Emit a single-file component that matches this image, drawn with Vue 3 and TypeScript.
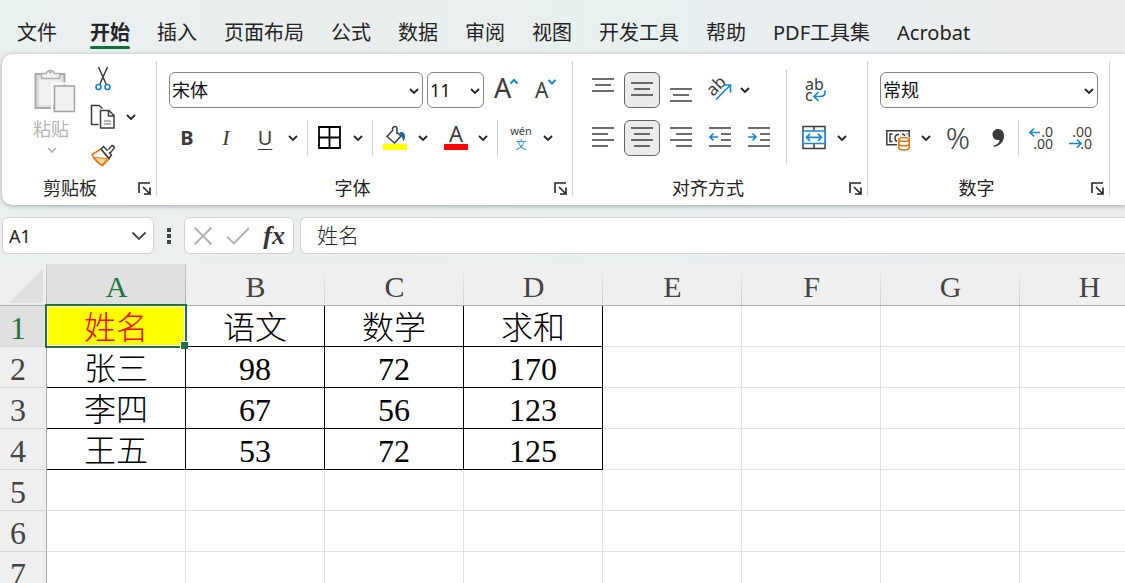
<script setup lang="ts">
import { ref } from 'vue'

interface Line { x1: number; x2: number; y: number }
interface AlignTool { name: string; active?: boolean; lines: Line[]; arrow?: string }

const tabs = ['文件', '开始', '插入', '页面布局', '公式', '数据', '审阅', '视图', '开发工具', '帮助', 'PDF工具集', 'Acrobat']
const activeTab = ref('开始')

const stack = (ys: number[], spans: [number, number][]): Line[] =>
  ys.map((y, i) => ({ x1: spans[i % spans.length][0], x2: spans[i % spans.length][1], y }))

const verticalTools: AlignTool[] = [
  { name: '顶端对齐', lines: stack([7, 13, 19], [[7, 29], [10, 26]]) },
  { name: '垂直居中', active: true, lines: stack([11, 17, 23], [[7, 29], [10, 26]]) },
  { name: '底端对齐', lines: stack([17, 23, 29], [[7, 29], [10, 26]]) },
]

const indentLines: Line[] = [
  { x1: 7, x2: 29, y: 8 }, { x1: 19, x2: 29, y: 14 }, { x1: 19, x2: 29, y: 20 }, { x1: 7, x2: 29, y: 26 },
]

const horizontalTools: AlignTool[] = [
  { name: '左对齐', lines: stack([8, 14, 20, 26], [[7, 29], [7, 23]]) },
  { name: '居中', active: true, lines: stack([8, 14, 20, 26], [[7, 29], [10, 26]]) },
  { name: '右对齐', lines: stack([8, 14, 20, 26], [[7, 29], [13, 29]]) },
  { name: '减少缩进量', lines: indentLines, arrow: 'M16 17H8M11.5 13.5L8 17l3.5 3.5' },
  { name: '增加缩进量', lines: indentLines, arrow: 'M7 17h8M11.5 13.5L15 17l-3.5 3.5' },
]

const font = ref('宋体')
const size = ref('11')
const format = ref('常规')
const cellName = ref('A1')
const formula = ref('姓名')

const columns = ['A', 'B', 'C', 'D', 'E', 'F', 'G', 'H']
const data: string[][] = [
  ['姓名', '语文', '数学', '求和'],
  ['张三', '98', '72', '170'],
  ['李四', '67', '56', '123'],
  ['王五', '53', '72', '125'],
]
const rowCount = 7
const cell = (row: number, col: number): string => data[row - 1]?.[col] ?? ''
</script>

<template>
  <div class="app">
    <nav class="tabs">
      <button
        v-for="tab in tabs"
        :key="tab"
        type="button"
        class="tab"
        :class="{ current: tab === activeTab }"
        @click="activeTab = tab"
      >{{ tab }}</button>
    </nav>

    <div class="ribbon">
      <section class="group clipboard">
        <div class="tools clip-tools">
          <button type="button" class="paste" disabled>
            <svg width="42" height="46" viewBox="0 0 42 46">
              <rect x="1.5" y="7" width="29" height="34" fill="#dedede" stroke="#a9a9a9" stroke-width="2" />
              <rect x="5" y="11" width="22" height="27" fill="#f0f0f0" />
              <path d="M7.5 11.500V6.500H12A4.500 4.500 0 0 1 20.500 6.500H25.500V11.500Z" fill="#f3f3f3" stroke="#b0b0b0" stroke-width="1.500" />
              <circle cx="16.300" cy="5.500" r="1.300" fill="#b0b0b0" />
              <path d="M18 45V16.500H42" fill="none" stroke="#fff" stroke-width="2" />
              <rect x="20.500" y="19" width="20" height="25.500" fill="#f1f1f1" stroke="#a3a3a3" stroke-width="1.500" />
            </svg>
            <span>粘贴</span>
            <svg width="20" height="10" viewBox="0 0 20 10"><path class="chev pale" d="M6 3l4 4 4-4" /></svg>
          </button>
          <div class="clip-small">
            <button type="button" class="tool" aria-label="剪切">
              <svg class="icon" viewBox="0 0 36 36">
                <path d="M13.500 6L21.500 24M22.500 6L14.500 24" class="ink" />
                <circle cx="13.500" cy="26" r="2.500" class="blue" />
                <circle cx="22.500" cy="26" r="2.500" class="blue" />
              </svg>
            </button>
            <div class="split">
              <button type="button" class="tool" aria-label="复制">
                <svg class="icon" viewBox="0 0 36 36">
                  <path d="M13.500 25.500H6.500V6.500H14l3.500 3" class="ink" />
                  <path d="M15.500 11.500h8.500l5 5v12.500H15.500zM23.500 11.500v5.500H29" class="ink" />
                  <path d="M19 22h7M19 25h7" class="ink thin" />
                </svg>
              </button>
              <button type="button" class="more" aria-label="复制选项"><svg class="arrow" viewBox="0 0 20 36"><path class="chev" d="M6 16l4 4 4-4" /></svg></button>
            </div>
            <button type="button" class="tool" aria-label="格式刷">
              <svg class="icon" viewBox="0 0 36 36">
                <path d="M16 12L7 17.500Q10 25 17.500 28.500L24 22z" fill="#fff" stroke="#e8730c" stroke-width="1.500" />
                <path d="M9.500 20.500l12.500 1-4.500 6.500q-5-2.500-8-7.500z" fill="#fbd8a0" stroke="#e8730c" />
                <path d="M22.500 16.500L27.500 10.500" stroke="#3c3c3c" stroke-width="5" stroke-linecap="round" />
                <path d="M22 17L27.500 10.500" stroke="#fff" stroke-width="2" stroke-linecap="round" />
                <path d="M16 12l2.500-2.500 8 8.500-2.500 3.500z" fill="#fff" stroke="#3c3c3c" stroke-width="1.500" />
                <path d="M22 16l2.500-3" stroke="#fff" stroke-width="2" />
              </svg>
            </button>
          </div>
        </div>
        <footer class="caption"><span>剪贴板</span>
          <button type="button" class="launcher" aria-label="剪贴板设置"><svg width="14" height="14" viewBox="0 0 14 14"><path d="M2 12V2h11M6 6l6 6M13 6.500V13H7" /></svg></button>
        </footer>
      </section>

      <section class="group font-group">
        <div class="tools">
          <div class="row">
            <label class="combo wide">
              <select v-model="font" aria-label="字体"><option>宋体</option></select>
              <svg class="combo-arrow" viewBox="0 0 20 36"><path class="chev" d="M8 16l4 4 4-4" /></svg>
            </label>
            <label class="combo small">
              <select v-model="size" aria-label="字号"><option>11</option></select>
              <svg class="combo-arrow" viewBox="0 0 20 36"><path class="chev" d="M8 16l4 4 4-4" /></svg>
            </label>
            <button type="button" class="tool" aria-label="增大字号">
              <svg class="icon" viewBox="0 0 36 36"><text x="6" y="26" font-size="27">A</text><path d="M22.500 11.500L26 8l3.500 3.500" class="blue bold" /></svg>
            </button>
            <button type="button" class="tool" aria-label="减小字号">
              <svg class="icon" viewBox="0 0 36 36"><text x="7" y="26" font-size="21">A</text><path d="M20.500 8L24 11.500 27.500 8" class="blue bold" /></svg>
            </button>
          </div>
          <div class="row">
            <div class="biu">
              <button type="button" class="tool letter strong">B</button>
              <button type="button" class="tool letter slanted">I</button>
              <div class="split">
                <button type="button" class="tool letter under">U</button>
                <button type="button" class="more" aria-label="下划线选项"><svg class="arrow" viewBox="0 0 20 36"><path class="chev" d="M6 16l4 4 4-4" /></svg></button>
              </div>
            </div>
            <i class="bar"></i>
            <div class="split">
              <button type="button" class="tool" aria-label="边框">
                <svg class="icon" viewBox="0 0 36 36"><path d="M7 7h21v21H7zM17.500 7v21M7 17.500h21" fill="none" stroke="#000" stroke-width="1.800" /></svg>
              </button>
              <button type="button" class="more" aria-label="边框选项"><svg class="arrow" viewBox="0 0 20 36"><path class="chev" d="M6 16l4 4 4-4" /></svg></button>
            </div>
            <i class="bar"></i>
            <div class="split">
              <button type="button" class="tool" aria-label="填充颜色">
                <svg class="icon" viewBox="0 0 36 36">
                  <path d="M15.500 10.500L10 16.500l7.500 6.500 6.500-7-4.500-4M15.500 11.500V9.500q0-3 2.500-3 2 0 2 3v4.500" class="ink" />
                  <path d="M22 12.500q6-2 6 4.500 0 2.500-1.500 4.500-1-4-2.500-6z" fill="#1565a8" />
                  <path d="M6 24h24v6H6z" fill="#ff0" />
                </svg>
              </button>
              <button type="button" class="more" aria-label="填充颜色选项"><svg class="arrow" viewBox="0 0 20 36"><path class="chev" d="M6 16l4 4 4-4" /></svg></button>
            </div>
            <div class="split">
              <button type="button" class="tool" aria-label="字体颜色">
                <svg class="icon" viewBox="0 0 36 36"><text x="19" y="22" font-size="22" text-anchor="middle">A</text><path d="M7 24h24v6H7z" fill="#f00" /></svg>
              </button>
              <button type="button" class="more" aria-label="字体颜色选项"><svg class="arrow" viewBox="0 0 20 36"><path class="chev" d="M6 16l4 4 4-4" /></svg></button>
            </div>
            <i class="bar"></i>
            <div class="split">
              <button type="button" class="tool" aria-label="拼音">
                <svg class="icon" viewBox="0 0 36 36"><text x="19" y="15" font-size="11" text-anchor="middle">wén</text><text x="19" y="29" font-size="11" text-anchor="middle" class="blue-text">文</text></svg>
              </button>
              <button type="button" class="more" aria-label="拼音选项"><svg class="arrow" viewBox="0 0 20 36"><path class="chev" d="M6 16l4 4 4-4" /></svg></button>
            </div>
          </div>
        </div>
        <footer class="caption"><span>字体</span>
          <button type="button" class="launcher" aria-label="字体设置"><svg width="14" height="14" viewBox="0 0 14 14"><path d="M2 12V2h11M6 6l6 6M13 6.500V13H7" /></svg></button>
        </footer>
      </section>

      <section class="group align-group">
        <div class="tools side">
          <div class="stack">
            <div class="row close">
              <button v-for="tool in verticalTools" :key="tool.name" type="button" class="tool" :class="{ pressed: tool.active }" :aria-label="tool.name">
                <svg class="icon" viewBox="0 0 36 36"><line v-for="l in tool.lines" :key="l.y" :x1="l.x1" :x2="l.x2" :y1="l.y" :y2="l.y" class="ink" /></svg>
              </button>
              <div class="split">
                <button type="button" class="tool" aria-label="方向">
                  <svg class="icon" viewBox="0 0 36 36">
                    <text x="11" y="25" font-size="17" transform="rotate(-45 11 25)">ab</text>
                    <path d="M14 27.500L28.500 13M21 13h7.500v7.500" class="blue" />
                  </svg>
                </button>
                <button type="button" class="more tight" aria-label="方向选项"><svg class="arrow" viewBox="0 0 20 36"><path class="chev" d="M6 16l4 4 4-4" /></svg></button>
              </div>
            </div>
            <div class="row close">
              <button v-for="tool in horizontalTools" :key="tool.name" type="button" class="tool" :class="{ pressed: tool.active }" :aria-label="tool.name">
                <svg class="icon" viewBox="0 0 36 36">
                  <line v-for="l in tool.lines" :key="l.y" :x1="l.x1" :x2="l.x2" :y1="l.y" :y2="l.y" class="ink" />
                  <path v-if="tool.arrow" :d="tool.arrow" class="blue" />
                </svg>
              </button>
            </div>
          </div>
          <i class="bar tall"></i>
          <div class="stack">
            <button type="button" class="tool" aria-label="自动换行">
              <svg class="icon" viewBox="0 0 36 36">
                <text x="9" y="18" font-size="16">ab</text><text x="9" y="29" font-size="16">c</text>
                <path d="M29 18.500v2q0 4-5 4h-5.500M22.500 20L18 24.500l4.500 4.500" class="blue" />
              </svg>
            </button>
            <div class="split">
              <button type="button" class="tool" aria-label="合并后居中">
                <svg class="icon" viewBox="0 0 36 36">
                  <path d="M7 6.500h22v22H7zM18 6.500v4M18 24v4.500" class="ink" />
                  <path d="M7 11h22v12.500H7z" fill="#fff" stroke="#1b87d3" stroke-width="1.500" />
                  <path d="M10.500 17.300h15M14 13.800l-3.500 3.500 3.500 3.500M22 13.800l3.500 3.500-3.500 3.500" class="blue" />
                </svg>
              </button>
              <button type="button" class="more" aria-label="合并选项"><svg class="arrow" viewBox="0 0 20 36"><path class="chev" d="M6 16l4 4 4-4" /></svg></button>
            </div>
          </div>
        </div>
        <footer class="caption"><span>对齐方式</span>
          <button type="button" class="launcher" aria-label="对齐设置"><svg width="14" height="14" viewBox="0 0 14 14"><path d="M2 12V2h11M6 6l6 6M13 6.500V13H7" /></svg></button>
        </footer>
      </section>

      <section class="group number-group">
        <div class="tools">
          <div class="row">
            <label class="combo fill">
              <select v-model="format" aria-label="数字格式"><option>常规</option></select>
              <svg class="combo-arrow" viewBox="0 0 20 36"><path class="chev" d="M8 16l4 4 4-4" /></svg>
            </label>
          </div>
          <div class="row">
            <div class="split">
              <button type="button" class="tool" aria-label="会计数字格式">
                <svg class="icon" viewBox="0 0 36 36">
                  <path d="M6.800 10.800h22.400v14H6.800z" class="ink" />
                  <path d="M12.500 14H10v7.500h2.500M19 14.500q-4 0-4 3.500t3 3.500M22 14q3 0 3 4M26.500 14h1" class="ink" />
                  <path d="M17 31V19q1-3 7-3t7 3v12z" fill="#fff" />
                  <path d="M18.800 19.500v8.500q0 2 5.200 2t5.200-2v-8.500z" fill="#fff" stroke="#e8730c" stroke-width="1.600" />
                  <ellipse cx="24" cy="19.500" rx="5.200" ry="2" fill="#fff" stroke="#e8730c" stroke-width="1.600" />
                  <path d="M18.800 23.700q0 2 5.200 2t5.200-2" fill="none" stroke="#e8730c" stroke-width="1.600" />
                </svg>
              </button>
              <button type="button" class="more" aria-label="会计格式选项"><svg class="arrow" viewBox="0 0 20 36"><path class="chev" d="M6 16l4 4 4-4" /></svg></button>
            </div>
            <button type="button" class="tool percent">%</button>
            <button type="button" class="tool" aria-label="千位分隔样式">
              <svg class="icon" viewBox="0 0 36 36"><path d="M18 9c4 0 6 3 6 7 0 5.500-3.500 9.500-10 11l-.5-1.200c4-1.300 6-3.300 6.200-6-4.200 1.200-7.200-1.800-7.200-5.300 0-3 2.200-5.500 5.500-5.500z" fill="#3a3a3a" /></svg>
            </button>
            <i class="bar flush"></i>
            <button type="button" class="tool" aria-label="增加小数位数">
              <svg class="icon" viewBox="0 0 36 36">
                <path d="M17 12.500H7M11 8.500l-4 4 4 4" class="blue" />
                <text x="30" y="17" font-size="14" text-anchor="end">.0</text>
                <text x="30" y="29" font-size="14" text-anchor="end">.00</text>
              </svg>
            </button>
            <button type="button" class="tool" aria-label="减少小数位数">
              <svg class="icon" viewBox="0 0 36 36">
                <text x="29" y="17" font-size="14" text-anchor="end">.00</text>
                <text x="29" y="29" font-size="14" text-anchor="end">.0</text>
                <path d="M6 23.500h11.500M14 19.500l4 4-4 4" class="blue" />
              </svg>
            </button>
          </div>
        </div>
        <footer class="caption"><span>数字</span>
          <button type="button" class="launcher" aria-label="数字设置"><svg width="14" height="14" viewBox="0 0 14 14"><path d="M2 12V2h11M6 6l6 6M13 6.500V13H7" /></svg></button>
        </footer>
      </section>
    </div>

    <div class="formula-bar">
      <div class="box name-box">
        <input v-model="cellName" aria-label="名称框" />
        <svg width="16" height="10" viewBox="0 0 16 10"><path d="M1.500 1.500L8 8l6.500-6.500" fill="none" stroke="#444" stroke-width="1.800" /></svg>
      </div>
      <svg class="dots" width="4" height="16" viewBox="0 0 4 16"><path d="M0 0h4v4H0zM0 6h4v4H0zM0 12h4v4H0z" fill="#444" /></svg>
      <div class="box fx-box">
        <button type="button" aria-label="取消"><svg width="20" height="20" viewBox="0 0 20 20"><path d="M1.500 1.500l17 17M18.500 1.500l-17 17" class="mute" /></svg></button>
        <button type="button" aria-label="输入"><svg width="24" height="20" viewBox="0 0 24 20"><path d="M1 10.500l7 7L23 2" class="mute" /></svg></button>
        <button type="button" class="fx">fx</button>
      </div>
      <div class="box formula"><input v-model="formula" aria-label="编辑栏" /></div>
    </div>

    <main class="sheet">
      <table>
        <colgroup><col class="index" /><col v-for="c in columns" :key="c" class="data" /></colgroup>
        <thead>
          <tr>
            <th class="corner"><svg width="34" height="34" viewBox="0 0 34 34"><path d="M34 0v34H0z" fill="#dfdfdf" /></svg></th>
            <th v-for="(c, i) in columns" :key="c" scope="col" :class="{ on: i === 0 }">{{ c }}</th>
          </tr>
        </thead>
        <tbody>
          <tr v-for="r in rowCount" :key="r">
            <th scope="row" :class="{ on: r === 1 }">{{ r }}</th>
            <td v-for="(c, i) in columns" :key="c" :class="{ ruled: r <= 4 && i < 4, picked: r === 1 && i === 0 }">
              {{ cell(r, i) }}<span v-if="r === 1 && i === 0" class="selection"></span>
            </td>
          </tr>
        </tbody>
      </table>
    </main>
  </div>
</template>

<style>
body {
  margin: 0;
}
</style>

<style scoped>
.app {
  display: flex;
  flex-direction: column;
  height: 100vh;
  overflow: hidden;
  color: #242424;
  font-family: "Noto Sans", "Noto Sans CJK SC", sans-serif;
  background: linear-gradient(90deg, #e9f0f0, #eaeeed 28%, #e8f0ef 50%, #e9eef0 75%, #ecedec);
}
.app * {
  box-sizing: border-box;
}
button {
  padding: 0;
  border: 0;
  background: none;
  color: inherit;
  font: inherit;
}
svg {
  display: block;
}

.tabs {
  display: flex;
  flex: none;
  gap: 27px;
  height: 54px;
  padding: 16px 17px 0;
  font-size: 20px;
  line-height: 33px;
  white-space: nowrap;
}
.tab {
  display: flex;
  flex-direction: column;
  height: 33px;
}
.tab:first-child {
  margin-right: 6px;
}
.tab.current {
  font-weight: 700;
}
.tab.current::after {
  flex: none;
  width: 100%;
  height: 3px;
  margin-top: -3px;
  border-radius: 2px;
  background: #0f703b;
  content: "";
}

.ribbon {
  display: flex;
  flex: none;
  margin-left: 2px;
  border-radius: 10px 0 0 10px;
  background: #fff;
  box-shadow: 0 1px 5px rgba(0, 0, 0, 0.3);
}
.group {
  display: flex;
  flex: none;
  flex-direction: column;
  margin: 7px 0 9px;
  padding: 11px 0 0 12px;
  border-right: 1px solid #d0d0d0;
}
.clipboard {
  width: 155px;
  padding-left: 10px;
}
.font-group {
  width: 416px;
}
.align-group {
  width: 295px;
}
.number-group {
  width: 242px;
  padding-right: 11px;
}
.tools {
  display: flex;
  flex-direction: column;
  gap: 12px;
  height: 84px;
}
.side {
  flex-direction: row;
  gap: 9px;
}
.stack {
  display: flex;
  flex-direction: column;
  gap: 12px;
}
.row {
  display: flex;
  align-items: center;
  gap: 4px;
}
.row.close,
.biu {
  gap: 3px;
}
.biu,
.split {
  display: flex;
}
.tool {
  display: flex;
  flex: none;
  align-items: center;
  justify-content: center;
  width: 36px;
  height: 36px;
}
.icon {
  flex: none;
  width: 36px;
  height: 36px;
  overflow: visible;
}
.pressed {
  border: 1px solid #616161;
  border-radius: 6px;
  background: #ebebeb;
}
.more {
  display: flex;
  width: 20px;
  height: 36px;
}
.more.tight {
  width: 14px;
  justify-content: center;
}
.arrow {
  flex: none;
  width: 20px;
  height: 36px;
}
.chev {
  fill: none;
  stroke: #242424;
  stroke-width: 1.8;
}
.chev.pale {
  stroke: #b8b8b8;
}
.ink {
  fill: none;
  stroke: #3c3c3c;
  stroke-width: 1.5;
}
.ink.thin {
  stroke: #666;
  stroke-width: 1;
}
.blue {
  fill: none;
  stroke: #1b87d3;
  stroke-width: 1.7;
}
.blue.bold {
  stroke-width: 2;
}
.icon text {
  fill: #3c3c3c;
}
.icon text.blue-text {
  fill: #1b87d3;
}
.bar {
  flex: none;
  width: 1px;
  height: 36px;
  background: #d0d0d0;
}
.bar.tall {
  height: 94px;
  margin-top: -2px;
}
.bar.flush {
  margin-left: -2px;
}
.letter {
  font-size: 20px;
  line-height: 24px;
  color: #3c3c3c;
}
.strong {
  font-weight: 700;
}
.slanted {
  font-family: "Liberation Serif", serif;
  font-size: 22px;
  font-style: italic;
}
.under {
  text-decoration: underline;
  text-decoration-thickness: 1px;
  text-underline-offset: 4px;
}
.percent {
  color: #3c3c3c;
  font-size: 30px;
  font-weight: 300;
  line-height: 32px;
}

.clip-tools {
  flex-direction: row;
  gap: 9px;
}
.paste {
  display: flex;
  flex: none;
  flex-direction: column;
  align-items: center;
  width: 62px;
  height: 92px;
  margin: -5px 0 0 2px;
  padding-left: 20px;
  color: #b4b4b4;
  font-size: 18px;
  line-height: 32px;
  white-space: nowrap;
}
.paste svg {
  flex: none;
}
.paste span {
  margin-right: 8px;
}
.paste svg:last-child {
  margin-right: 6px;
}
.clip-small {
  display: flex;
  flex-direction: column;
  gap: 2px;
  margin-top: -11px;
}

.combo {
  display: flex;
  position: relative;
  height: 36px;
  border: 1px solid #868686;
  border-radius: 6px;
}
.wide {
  width: 254px;
}
.small {
  width: 57px;
}
.fill {
  flex: 1;
}
.combo select {
  width: 100%;
  padding: 0 20px 0 2px;
  border: 0;
  outline: 0;
  appearance: none;
  background: none;
  color: #111;
  font: 18px "Noto Sans", "Noto Sans CJK SC", sans-serif;
}
.combo-arrow {
  position: absolute;
  top: 0;
  right: 0;
  width: 20px;
  height: 36px;
  pointer-events: none;
}

.caption {
  display: flex;
  align-items: center;
  height: 16px;
  margin: 24px 0 0 -12px;
  font-size: 18px;
  line-height: 16px;
}
.caption span {
  flex: 1;
  text-align: center;
}
.launcher {
  width: 24px;
  padding-left: 5px;
}
.clipboard .caption {
  margin-left: -4px;
}
.number-group .caption {
  margin-right: -11px;
}
.launcher path {
  fill: none;
  stroke: #242424;
  stroke-width: 1.6;
}

.formula-bar {
  display: flex;
  flex: none;
  align-items: center;
  padding: 12px 0 10px 2px;
}
.box {
  display: flex;
  align-items: center;
  height: 37px;
  border: 1px solid #d2d2d2;
  border-radius: 6px;
  background: #fff;
}
.box input {
  width: 100%;
  min-width: 0;
  padding: 0;
  border: 0;
  outline: 0;
  background: none;
  color: #242424;
  font: 18px "Noto Sans", "Noto Sans CJK SC", sans-serif;
}
.name-box {
  width: 152px;
  padding: 0 6px;
}
.name-box svg {
  flex: none;
}
.dots {
  margin: 0 13px;
}
.fx-box {
  justify-content: space-between;
  width: 110px;
  padding: 0 8px;
}
.mute {
  fill: none;
  stroke: #b0b0b0;
  stroke-width: 1.8;
}
.fx {
  color: #333;
  font: italic 700 26px/32px "Liberation Serif", serif;
}
.formula {
  flex: 1;
  margin-left: 6px;
  padding: 0 0 4px 16px;
  border-right: 0;
  border-radius: 6px 0 0 6px;
}
.formula input {
  font-size: 21px;
  font-weight: 300;
}

.sheet {
  flex: 1;
  min-height: 0;
  overflow: hidden;
  background: #fff;
}
table {
  width: 1159px;
  border-spacing: 0;
  table-layout: fixed;
  font: 300 32px/36px "Liberation Serif", "Noto Sans CJK SC", serif;
}
.index {
  width: 47px;
}
.data {
  width: 139px;
}
th,
td {
  height: 41px;
  padding: 0;
  border: solid #e0e0e0;
  border-width: 0 1px 1px 0;
  font-weight: 300;
  text-align: center;
  white-space: nowrap;
}
th {
  background: #efefef;
  color: #444;
}
thead th {
  height: 42px;
  padding-top: 4px;
  border-right: 0;
  border-bottom-color: #ababab;
  background: linear-gradient(#efefef, #cfcfcf) right / 1px 100% no-repeat #efefef;
  font-size: 30px;
}
tbody th {
  padding: 4px 10px 0 0;
  border-right-color: #ababab;
  border-bottom-color: #d6d6d6;
}
thead .on {
  border-left: 0;
  background: linear-gradient(#c8c8c8, #b0b0b0) right / 1px 100% no-repeat #e0e0e0;
  color: #217346;
}
tbody .on {
  background: #e0e0e0;
  color: #217346;
}
thead .corner {
  padding: 3px 0 0 9px;
  background: linear-gradient(#d0d0d0, #b0b0b0) right / 1px 100% no-repeat #efefef;
}
td {
  padding-top: 4px;
  color: #000;
}
td.ruled {
  border-color: #000;
}
td.picked {
  position: relative;
  background: #ff0;
  color: #f00;
}
.selection {
  position: absolute;
  inset: -2px;
  border: 2px solid #217346;
  box-shadow: inset 0 0 0 1px #fff;
}
.selection::after {
  position: absolute;
  right: -3px;
  bottom: -3px;
  width: 7px;
  height: 7px;
  border: solid #fff;
  border-width: 1px 0 0 1px;
  background: #217346;
  content: "";
}
</style>
